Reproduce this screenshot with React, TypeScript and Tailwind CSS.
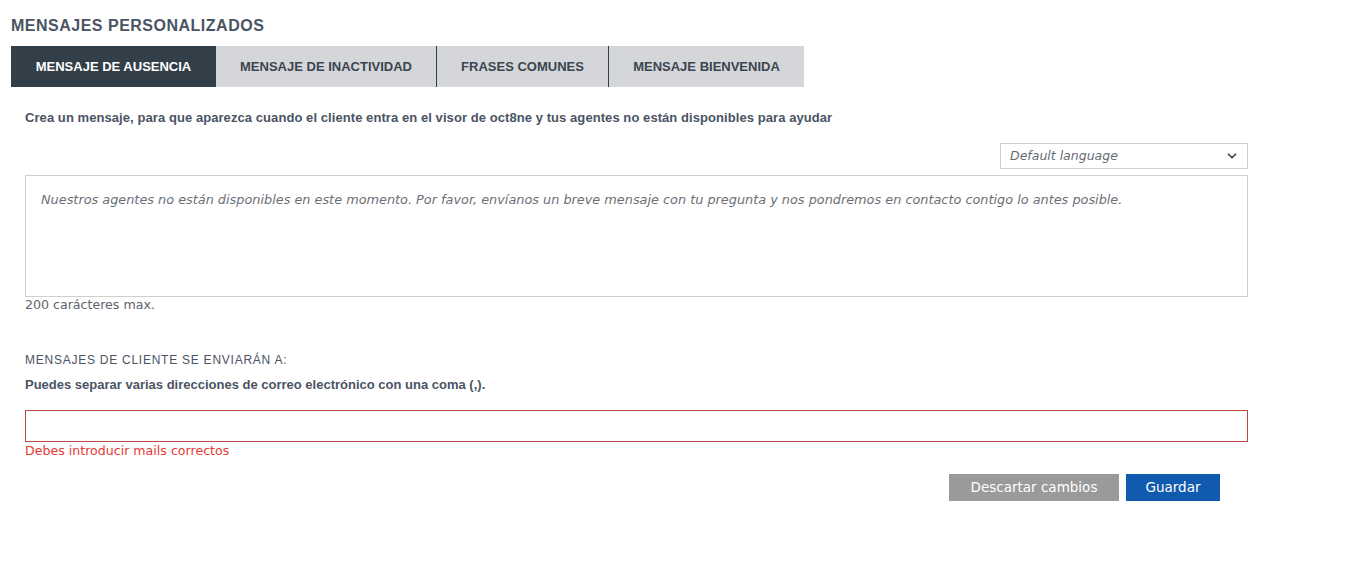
import { ChevronDown } from "lucide-react";

const tabs = [
  { label: "MENSAJE DE AUSENCIA", w: "w-[205px]", active: true },
  { label: "MENSAJE DE INACTIVIDAD", w: "w-[220px]" },
  { label: "FRASES COMUNES", w: "w-[172px]" },
  { label: "MENSAJE BIENVENIDA", w: "w-[196px]" },
];

export default function App() {
  return (
    <div className="min-h-[562px] w-[1348px] bg-white font-['Liberation_Sans',Arial,sans-serif]">
      <div className="pl-[11px] pt-[16px]">
        <h1 className="text-[16px] font-bold leading-[20px] tracking-[0.5px] text-[#4a5464]">
          MENSAJES PERSONALIZADOS
        </h1>

        {/* Tabs */}
        <div className="mt-[10px] flex h-[41px]">
          {tabs.map((t, idx) => (
            <div
              key={t.label}
              className={`flex items-center justify-center text-[13px] font-bold ${t.w} ${
                t.active
                  ? "bg-[#323e48] text-white"
                  : "bg-[#d5d6da] text-[#3a4550]"
              } ${idx > 1 ? "border-l border-[#323e48]" : ""}`}
            >
              {t.label}
            </div>
          ))}
        </div>
      </div>

      <div className="w-[1248px] pl-[25px]">
        <p className="mt-[23px] text-[13px] font-bold leading-[16px] tracking-[0.07px] text-[#4a5464]">
          Crea un mensaje, para que aparezca cuando el cliente entra en el visor de oct8ne y tus agentes no están disponibles para ayudar
        </p>

        <div className="mt-[17px] flex justify-end">
          <div className="flex h-[26px] w-[248px] items-center justify-between border border-[#cfcfcf] pl-[9px] pr-[8px] font-['DejaVu_Sans',sans-serif] text-[12.5px] italic text-[#666c75]">
            <span>Default language</span>
            <ChevronDown size={14} strokeWidth={3} className="text-[#3a4550]" />
          </div>
        </div>

        <div className="mt-[6px] h-[122px] border border-[#cfcfcf] px-[15px] pt-[14px] font-['DejaVu_Sans',sans-serif] text-[12.85px] italic leading-[20px] text-[#6b7078]">
          Nuestros agentes no están disponibles en este momento. Por favor, envíanos un breve mensaje con tu pregunta y nos pondremos en contacto contigo lo antes posible.
        </div>
        <p className="mt-0 font-['DejaVu_Sans',sans-serif] text-[12.6px] leading-[16px] text-[#5d646d]">
          200 carácteres max.
        </p>

        <p className="mt-[39px] text-[12px] leading-[16px] tracking-[0.75px] text-[#4a5464]">
          MENSAJES DE CLIENTE SE ENVIARÁN A:
        </p>
        <p className="mt-[9px] text-[13px] font-bold leading-[16px] text-[#4a5464]">
          Puedes separar varias direcciones de correo electrónico con una coma (,).
        </p>

        <div className="mt-[17px] h-[32px] border border-[#b94a48]" />
        <p className="mt-[1px] font-['DejaVu_Sans',sans-serif] text-[12.6px] leading-[16px] text-[#e53935]">
          Debes introducir mails correctos
        </p>

        <div className="mt-[15px] flex justify-end gap-[7px] pr-[28px]">
          <button className="h-[27px] w-[170px] bg-[#9a9a9a] font-['DejaVu_Sans',sans-serif] text-[13.5px] text-white">
            Descartar cambios
          </button>
          <button className="h-[27px] w-[94px] bg-[#105bb0] font-['DejaVu_Sans',sans-serif] text-[13.5px] text-white">
            Guardar
          </button>
        </div>
      </div>
    </div>
  );
}
